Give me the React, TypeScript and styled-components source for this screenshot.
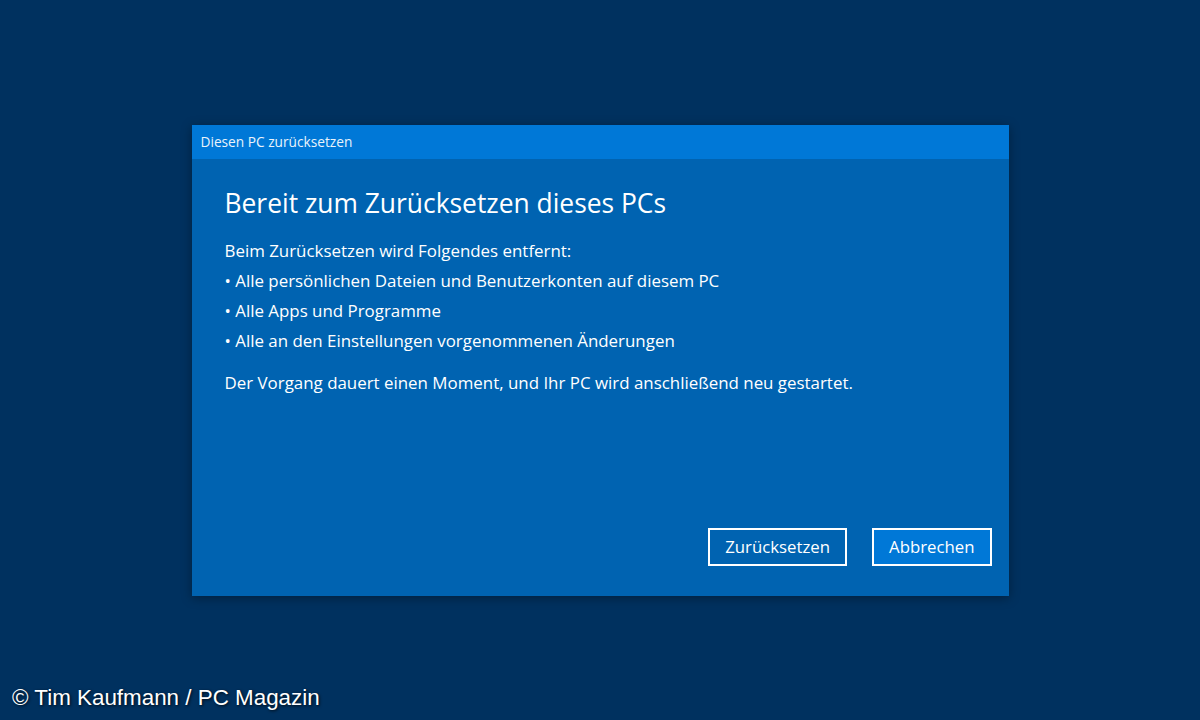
import React from "react"
import styled, { createGlobalStyle } from "styled-components"

const GlobalStyle = createGlobalStyle`
  html, body {
    margin: 0;
    padding: 0;
    background: #00305f;
  }
  * {
    box-sizing: border-box;
  }
`

const Screen = styled.div`
  position: relative;
  width: 1200px;
  height: 720px;
  display: flex;
  align-items: center;
  justify-content: center;
  background: #00315f;
  font-family: "Open Sans", "Noto Sans", sans-serif;
  color: #ffffff;
  overflow: hidden;
`

const Dialog = styled.div`
  width: 817px;
  height: 471px;
  display: flex;
  flex-direction: column;
  background: #0063b1;
  box-shadow: 0 2px 10px rgba(0, 0, 0, 0.35);
`

const TitleBar = styled.div`
  height: 34px;
  display: flex;
  align-items: center;
  padding: 0 9px;
  background: #0078d7;
  font-size: 13.7px;
  color: #eaf3fb;
`

const Body = styled.div`
  flex: 1;
  display: flex;
  flex-direction: column;
  padding: 26px 17px 30px 33px;
`

const Heading = styled.h1`
  margin: 0 0 15px 0;
  font-size: 26.4px;
  font-weight: 400;
  line-height: 36px;
`

const Line = styled.p<{ $gapTop?: number }>`
  margin: ${(p) => p.$gapTop ?? 0}px 0 0 0;
  font-size: 16.9px;
  line-height: 30px;
`

const Spacer = styled.div`
  flex: 1;
`

const ButtonRow = styled.div`
  display: flex;
  justify-content: flex-end;
  gap: 25px;
`

const Button = styled.button<{ $primary?: boolean }>`
  height: 38px;
  padding: 0 15px;
  border: 2px solid #ffffff;
  background: ${(p) => (p.$primary ? "#0078d7" : "#0063b1")};
  color: #ffffff;
  font-family: inherit;
  font-size: 16.8px;
`

const Credit = styled.div`
  position: absolute;
  left: 12px;
  bottom: 9px;
  font-family: "Liberation Sans", Arial, sans-serif;
  font-size: 22.4px;
  color: #ffffff;
  text-shadow: 1px 1px 3px rgba(0, 0, 0, 0.8);
`

export default function App() {
  return (
    <Screen>
      <GlobalStyle />
      <Dialog>
        <TitleBar>Diesen PC zurücksetzen</TitleBar>
        <Body>
          <Heading>Bereit zum Zurücksetzen dieses PCs</Heading>
          <Line>Beim Zurücksetzen wird Folgendes entfernt:</Line>
          <Line>• Alle persönlichen Dateien und Benutzerkonten auf diesem PC</Line>
          <Line>• Alle Apps und Programme</Line>
          <Line>• Alle an den Einstellungen vorgenommenen Änderungen</Line>
          <Line $gapTop={12}>
            Der Vorgang dauert einen Moment, und Ihr PC wird anschließend neu gestartet.
          </Line>
          <Spacer />
          <ButtonRow>
            <Button>Zurücksetzen</Button>
            <Button $primary>Abbrechen</Button>
          </ButtonRow>
        </Body>
      </Dialog>
      <Credit>© Tim Kaufmann / PC Magazin</Credit>
    </Screen>
  )
}
